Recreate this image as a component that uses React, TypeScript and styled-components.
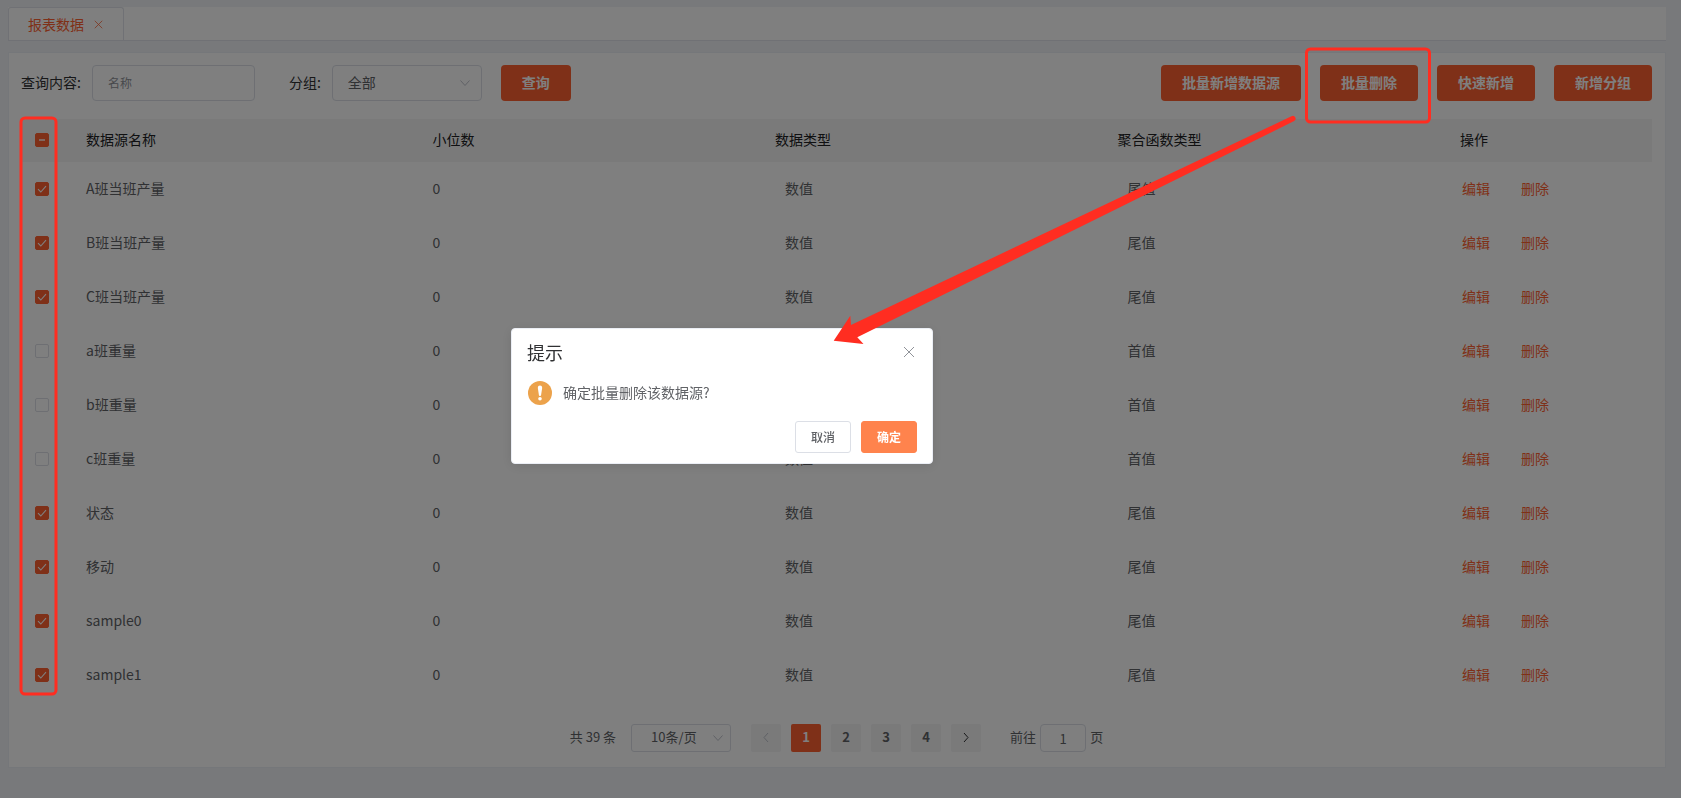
import React, { useEffect, useRef, useState } from "react";
import styled, { createGlobalStyle } from "styled-components";

const GlobalStyle = createGlobalStyle`
  * { box-sizing: border-box; }
  body {
    margin: 0;
    background: #f0f2f7;
    color: #606266;
    font: 14px/20px "Noto Sans CJK SC", sans-serif;
  }
  button, input, select { font: inherit; color: inherit; margin: 0; }
  button { cursor: pointer; }
`;

const Page = styled.div`
  position: relative;
  min-height: 100vh;
  padding: 7px 15px 30px 8px;
`;

const TabBar = styled.nav`
  display: flex;
  height: 34px;
  background: #fff;
  border-bottom: 1px solid #e0e3ea;
`;

const Tab = styled.div`
  display: flex;
  align-items: center;
  gap: 9px;
  padding: 0 20px 0 19px;
  color: #ff6130;
  border: 1px solid #e0e3ea;
  border-bottom: 0;
  border-radius: 3px 3px 0 0;
`;

const IconButton = styled.button<{ $size: number }>`
  display: flex;
  align-items: center;
  justify-content: center;
  width: ${(p) => p.$size}px;
  height: ${(p) => p.$size}px;
  padding: 0;
  border: 0;
  background: none;
`;

const Panel = styled.main`
  margin-top: 11px;
  padding: 12px 13px 15px 12px;
  background: #fff;
  border: 1px solid #ebeef5;
`;

const Toolbar = styled.form`
  display: flex;
  align-items: center;
  height: 36px;
  color: #303133;
`;

const Field = styled.label`
  display: flex;
  align-items: center;
  gap: 11px;
  margin-right: 19px;
  white-space: nowrap;
  & + & { margin-left: 15px; }
`;

const FieldName = styled.span`
  padding-bottom: 2px;
`;

const TextInput = styled.input`
  width: 163px;
  height: 36px;
  padding: 0 15px 2px;
  font-size: 12px;
  color: #606266;
  background: #fff;
  border: 1px solid #dcdfe6;
  border-radius: 4px;
  &::placeholder { color: #909399; opacity: 1; }
`;

const SelectBox = styled.span<{ $small?: boolean }>`
  position: relative;
  display: block;
  width: ${(p) => (p.$small ? 100 : 150)}px;
  svg {
    position: absolute;
    right: ${(p) => (p.$small ? 7 : 11)}px;
    top: 50%;
    margin-top: -6px;
    pointer-events: none;
  }
`;

const Select = styled.select<{ $small?: boolean }>`
  display: block;
  appearance: none;
  width: 100%;
  height: ${(p) => (p.$small ? 28 : 36)}px;
  padding: 0 ${(p) => (p.$small ? 19 : 15)}px 2px;
  font-size: ${(p) => (p.$small ? 13 : 14)}px;
  color: #606266;
  background: #fff;
  border: 1px solid #dcdfe6;
  border-radius: ${(p) => (p.$small ? 3 : 4)}px;
`;

const PrimaryButton = styled.button`
  height: 36px;
  padding: 0 21px 2px;
  color: #fff;
  font-weight: 700;
  white-space: nowrap;
  background: #ff6130;
  border: 0;
  border-radius: 4px;
`;

const Actions = styled.div`
  display: flex;
  gap: 19px;
  margin-left: auto;
`;

const Table = styled.table`
  width: 100%;
  margin-top: 18px;
  table-layout: fixed;
  border-collapse: collapse;
`;

const HeadCell = styled.th`
  height: 43px;
  padding: 0 10px 3px;
  color: #202123;
  font-weight: 400;
  text-align: left;
  background: #f5f5f5;
`;

const Cell = styled.td<{ $inset?: boolean }>`
  height: 54px;
  padding: 0 10px 2px ${(p) => (p.$inset ? 20 : 10)}px;
`;

const CheckCell = styled.td`
  padding: 0 0 0 14px;
`;

const CheckHead = styled(HeadCell)`
  padding: 0 0 1px 14px;
`;

const CheckLabel = styled.label`
  position: relative;
  display: block;
  width: 14px;
  height: 14px;
  svg { position: absolute; left: 0; top: 0; pointer-events: none; }
`;

const CheckInput = styled.input<{ $filled: boolean }>`
  appearance: none;
  display: block;
  width: 14px;
  height: 14px;
  border: 1px solid ${(p) => (p.$filled ? "#ff6130" : "#dcdfe6")};
  border-radius: 2px;
  background: ${(p) => (p.$filled ? "#ff6130" : "#fff")};
`;

const RowLinks = styled.div`
  display: flex;
  gap: 31px;
  padding-left: 2px;
`;

const RowLink = styled.a`
  color: #ff6130;
  text-decoration: none;
`;

const Pagination = styled.div`
  display: flex;
  align-items: center;
  justify-content: center;
  height: 28px;
  margin-top: 22px;
  font-size: 13px;
`;

const Pages = styled.div`
  display: flex;
  gap: 10px;
  margin: 0 29px 0 20px;
`;

const PageButton = styled.button<{ $active?: boolean }>`
  display: flex;
  align-items: center;
  justify-content: center;
  width: 30px;
  height: 28px;
  padding: 0 0 2px;
  font-weight: 700;
  color: ${(p) => (p.$active ? "#fff" : "#606266")};
  background: ${(p) => (p.$active ? "#ff6130" : "#f4f4f5")};
  border: 0;
  border-radius: 2px;
`;

const Total = styled.span`
  margin-right: 15px;
  padding-bottom: 2px;
`;

const Jumper = styled.label`
  display: flex;
  align-items: center;
  gap: 4px;
`;

const JumpInput = styled.input`
  width: 46px;
  height: 28px;
  padding: 0;
  text-align: center;
  background: #fff;
  border: 1px solid #dcdfe6;
  border-radius: 4px;
`;

const Overlay = styled.div`
  position: fixed;
  inset: 0;
  display: flex;
  align-items: center;
  justify-content: center;
  padding: 0 237px 6px 0;
  background: rgba(0, 0, 0, 0.5);
`;

const Dialog = styled.section`
  width: 422px;
  padding: 13px 15px 10px;
  background: #fff;
  border: 1px solid #ebeef5;
  border-radius: 4px;
  box-shadow: 0 2px 12px rgba(0, 0, 0, 0.1);
`;

const DialogHeader = styled.header`
  display: flex;
  align-items: center;
  justify-content: space-between;
`;

const DialogTitle = styled.h2`
  margin: 0;
  color: #303133;
  font-size: 18px;
  line-height: 20px;
  font-weight: 400;
`;

const Message = styled.p`
  display: flex;
  align-items: center;
  gap: 11px;
  height: 24px;
  margin: 19px 0 16px;
  padding-left: 1px;
`;

const MessageText = styled.span`
  padding-bottom: 2px;
`;

const DialogFooter = styled.footer`
  display: flex;
  justify-content: flex-end;
  gap: 10px;
`;

const DialogButton = styled.button<{ $primary?: boolean }>`
  width: 56px;
  height: 32px;
  padding: 0;
  font-size: 12px;
  font-weight: ${(p) => (p.$primary ? 700 : 500)};
  color: ${(p) => (p.$primary ? "#fff" : "#606266")};
  background: ${(p) => (p.$primary ? "#ff834d" : "#fff")};
  border: 1px solid ${(p) => (p.$primary ? "#ff834d" : "#dcdfe6")};
  border-radius: 3px;
`;

const Marks = styled.svg`
  position: absolute;
  left: 0;
  top: 0;
  pointer-events: none;
`;

const Cross = ({ size, color }: { size: number; color: string }) => (
  <svg width={size} height={size} viewBox="0 0 12 12" fill="none" stroke={color} aria-hidden="true">
    <path d="M1 1L11 11M11 1L1 11" />
  </svg>
);

const Chevron = ({ d, color }: { d: string; color: string }) => (
  <svg width="12" height="12" viewBox="0 0 12 12" fill="none" stroke={color} aria-hidden="true">
    <path d={d} />
  </svg>
);

const DOWN = "M1.5 3.5L6 8.5L10.5 3.5";
const LEFT = "M8 2L4 6.5L8 11";
const RIGHT = "M4 2L8 6.5L4 11";

type CheckProps = { checked: boolean; partial?: boolean; label: string; onChange: () => void };

function Check({ checked, partial = false, label, onChange }: CheckProps) {
  const ref = useRef<HTMLInputElement>(null);
  useEffect(() => {
    if (ref.current) ref.current.indeterminate = partial;
  }, [partial]);
  return (
    <CheckLabel>
      <CheckInput
        ref={ref}
        type="checkbox"
        aria-label={label}
        checked={checked}
        onChange={onChange}
        $filled={checked || partial}
      />
      {(checked || partial) && (
        <svg width="14" height="14" viewBox="0 0 14 14" fill="none" stroke="#fff" aria-hidden="true">
          {partial ? <path d="M4 7H10" strokeWidth="2" opacity="0.7" /> : <path d="M3 7.2L5.8 10L11 4.2" strokeWidth="1.1" />}
        </svg>
      )}
    </CheckLabel>
  );
}

const ROWS = [
  { name: "A班当班产量", fn: "尾值", on: true },
  { name: "B班当班产量", fn: "尾值", on: true },
  { name: "C班当班产量", fn: "尾值", on: true },
  { name: "a班重量", fn: "首值", on: false },
  { name: "b班重量", fn: "首值", on: false },
  { name: "c班重量", fn: "首值", on: false },
  { name: "状态", fn: "尾值", on: true },
  { name: "移动", fn: "尾值", on: true },
  { name: "sample0", fn: "尾值", on: true },
  { name: "sample1", fn: "尾值", on: true },
];

export default function App() {
  const [picked, setPicked] = useState(ROWS.map((r) => r.on));
  const all = picked.every(Boolean);
  const some = picked.some(Boolean);

  return (
    <>
      <GlobalStyle />
      <Page>
        <TabBar>
          <Tab>
            报表数据
            <IconButton $size={10} aria-label="关闭标签">
              <Cross size={9} color="#ff6130" />
            </IconButton>
          </Tab>
        </TabBar>
        <Panel>
          <Toolbar onSubmit={(e) => e.preventDefault()}>
            <Field>
              <FieldName>查询内容:</FieldName>
              <TextInput placeholder="名称" />
            </Field>
            <Field>
              <FieldName>分组:</FieldName>
              <SelectBox>
                <Select defaultValue="全部">
                  <option>全部</option>
                </Select>
                <Chevron d={DOWN} color="#c0c4cc" />
              </SelectBox>
            </Field>
            <PrimaryButton type="submit">查询</PrimaryButton>
            <Actions>
              <PrimaryButton type="button">批量新增数据源</PrimaryButton>
              <PrimaryButton type="button">批量删除</PrimaryButton>
              <PrimaryButton type="button">快速新增</PrimaryButton>
              <PrimaryButton type="button">新增分组</PrimaryButton>
            </Actions>
          </Toolbar>
          <Table>
            <colgroup>
              <col width="55" />
              <col />
              <col width="21%" />
              <col width="21%" />
              <col width="21%" />
              <col width="202" />
            </colgroup>
            <thead>
              <tr>
                <CheckHead>
                  <Check
                    checked={all}
                    partial={some && !all}
                    label="全选"
                    onChange={() => setPicked(picked.map(() => !all))}
                  />
                </CheckHead>
                <HeadCell>数据源名称</HeadCell>
                <HeadCell>小位数</HeadCell>
                <HeadCell>数据类型</HeadCell>
                <HeadCell>聚合函数类型</HeadCell>
                <HeadCell>操作</HeadCell>
              </tr>
            </thead>
            <tbody>
              {ROWS.map((row, i) => (
                <tr key={row.name}>
                  <CheckCell>
                    <Check
                      checked={picked[i]}
                      label={row.name}
                      onChange={() => setPicked(picked.map((v, j) => (j === i ? !v : v)))}
                    />
                  </CheckCell>
                  <Cell>{row.name}</Cell>
                  <Cell>0</Cell>
                  <Cell $inset>数值</Cell>
                  <Cell $inset>{row.fn}</Cell>
                  <Cell>
                    <RowLinks>
                      <RowLink href="#edit">编辑</RowLink>
                      <RowLink href="#delete">删除</RowLink>
                    </RowLinks>
                  </Cell>
                </tr>
              ))}
            </tbody>
          </Table>
          <Pagination>
            <Total>共 39 条</Total>
            <SelectBox $small>
              <Select $small aria-label="每页条数" defaultValue="10条/页">
                <option>10条/页</option>
              </Select>
              <Chevron d={DOWN} color="#c0c4cc" />
            </SelectBox>
            <Pages>
              <PageButton aria-label="上一页">
                <Chevron d={LEFT} color="#c0c4cc" />
              </PageButton>
              <PageButton $active>1</PageButton>
              <PageButton>2</PageButton>
              <PageButton>3</PageButton>
              <PageButton>4</PageButton>
              <PageButton aria-label="下一页">
                <Chevron d={RIGHT} color="#303133" />
              </PageButton>
            </Pages>
            <Jumper>
              <FieldName>前往</FieldName>
              <JumpInput defaultValue="1" />
              <FieldName>页</FieldName>
            </Jumper>
          </Pagination>
        </Panel>
      </Page>
      <Overlay>
        <Dialog role="dialog" aria-modal="true" aria-labelledby="dialog-title">
          <DialogHeader>
            <DialogTitle id="dialog-title">提示</DialogTitle>
            <IconButton $size={16} aria-label="关闭">
              <Cross size={12} color="#909399" />
            </IconButton>
          </DialogHeader>
          <Message>
            <svg width="24" height="24" viewBox="0 0 24 24" aria-hidden="true">
              <circle cx="12" cy="12" r="12" fill="#eca24b" />
              <path d="M9.8 6.8a2.2 2.2 0 0 1 4.4 0L13.1 14a1.1 1.1 0 0 1-2.2 0Z" fill="#fff" />
              <circle cx="12" cy="17.8" r="1.8" fill="#fff" />
            </svg>
            <MessageText>确定批量删除该数据源?</MessageText>
          </Message>
          <DialogFooter>
            <DialogButton>取消</DialogButton>
            <DialogButton $primary>确定</DialogButton>
          </DialogFooter>
        </Dialog>
      </Overlay>
      <Marks width="1440" height="700" viewBox="0 0 1440 700" aria-hidden="true">
        <g fill="none" stroke="#ff2d21" strokeWidth="3">
          <rect x="21" y="118" width="35" height="576" rx="4" />
          <rect x="1306.5" y="49" width="123" height="73" rx="4" />
        </g>
        <path
          d="M1291.5 116.2a2.6 2.6 0 0 1 2.6 4.8L857.3 337.3L863.5 344L833.7 340.7L850.3 315.7L851 325Z"
          fill="#ff2d21"
        />
      </Marks>
    </>
  );
}
